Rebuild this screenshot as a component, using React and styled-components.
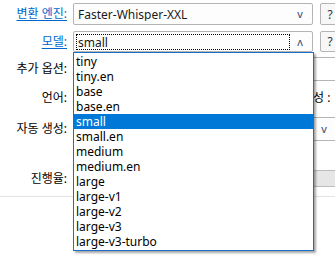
import React from "react";
import styled, { createGlobalStyle } from "styled-components";

const GlobalStyle = createGlobalStyle`
  html, body {
    margin: 0;
    padding: 0;
    background: #ffffff;
    overflow: hidden;
  }
  body {
    font-family: "Noto Sans", "Noto Sans CJK KR", sans-serif;
    font-size: 12px;
    color: #000;
  }
`;

const Page = styled.div`
  position: relative;
  width: 335px;
  height: 261px;
  overflow: hidden;
`;

const Form = styled.div`
  display: flex;
  flex-direction: column;
  padding-top: 3px;
`;

const Row = styled.div`
  display: flex;
  align-items: center;
  margin-top: ${(p) => p.$top || 0}px;
  height: ${(p) => p.$h || 22}px;
`;

const Label = styled.div`
  width: 67px;
  flex: none;
  margin-right: 6px;
  text-align: right;
  white-space: nowrap;
  line-height: 16px;
  color: ${(p) => (p.$link ? "#0066cc" : "#000")};
  text-decoration: ${(p) => (p.$link ? "underline" : "none")};
  text-underline-offset: 2px;
`;

const Combo = styled.div`
  box-sizing: border-box;
  flex: none;
  width: ${(p) => p.$w}px;
  height: 100%;
  border: 1px solid #b4b4b4;
  border-radius: 2px;
  background: #fdfdfd;
  display: flex;
  align-items: center;
  padding: 0 2px 0 2px;
`;

const ComboText = styled.div`
  flex: 1;
  height: 16px;
  line-height: 15px;
  padding-left: 1px;
  color: #1a1a1a;
  box-sizing: border-box;
  border: 1px dotted ${(p) => (p.$focus ? "#000" : "transparent")};
  white-space: nowrap;
  overflow: hidden;
`;

const Arrow = styled.div`
  width: 20px;
  text-align: center;
  color: #3c4a6a;
  font-size: 11px;
  line-height: 14px;
`;

const Help = styled.div`
  box-sizing: border-box;
  flex: none;
  margin-left: 7px;
  width: 20px;
  height: 100%;
  border: 1px solid #b4b4b4;
  border-radius: 2px;
  background: #f7f7f7;
  display: flex;
  align-items: center;
  justify-content: center;
  color: #333;
  font-size: 12px;
`;

const Input = styled.div`
  box-sizing: border-box;
  flex: none;
  width: 270px;
  height: 100%;
  border: 1px solid #b4b4b4;
  background: #fff;
`;

const SideText = styled.div`
  margin-left: 6px;
  white-space: nowrap;
  line-height: 16px;
`;

const Progress = styled.div`
  box-sizing: border-box;
  flex: none;
  width: 270px;
  height: 100%;
  border: 1px solid #bcbcbc;
  background: #e6e6e6;
`;

const Separator = styled.div`
  margin-top: 9px;
  height: 1px;
  background: #e3e3e3;
`;

const List = styled.div`
  position: absolute;
  left: 73px;
  top: 52px;
  width: 241px;
  box-sizing: border-box;
  border: 1px solid #1c6fc4;
  background: #fff;
  box-shadow: 2px 2px 2px rgba(0, 0, 0, 0.35);
  padding: 1px 0;
`;

const Item = styled.div`
  height: 15px;
  line-height: 15px;
  padding-left: 2px;
  white-space: nowrap;
  background: ${(p) => (p.$active ? "#0078d7" : "transparent")};
  color: ${(p) => (p.$active ? "#fff" : "#000")};
`;

const models = [
  "tiny",
  "tiny.en",
  "base",
  "base.en",
  "small",
  "small.en",
  "medium",
  "medium.en",
  "large",
  "large-v1",
  "large-v2",
  "large-v3",
  "large-v3-turbo",
];

export default function App() {
  return (
    <>
      <GlobalStyle />
      <Page>
        <Form>
          <Row $h={22}>
            <Label $link>변환 엔진:</Label>
            <Combo $w={240}>
              <ComboText>Faster-Whisper-XXL</ComboText>
              <Arrow>v</Arrow>
            </Combo>
            <Help>?</Help>
          </Row>
          <Row $top={6} $h={21}>
            <Label $link>모델:</Label>
            <Combo $w={240}>
              <ComboText $focus>small</ComboText>
              <Arrow>ʌ</Arrow>
            </Combo>
            <Help>?</Help>
          </Row>
          <Row $top={5} $h={24}>
            <Label>추가 옵션:</Label>
            <Input />
          </Row>
          <Row $top={6} $h={21}>
            <Label>언어:</Label>
            <Combo $w={223}>
              <ComboText />
              <Arrow>v</Arrow>
            </Combo>
            <SideText>구성 :</SideText>
          </Row>
          <Row $top={9} $h={24}>
            <Label>자동 생성:</Label>
            <Combo $w={264}>
              <ComboText />
              <Arrow>v</Arrow>
            </Combo>
          </Row>
          <Row $top={29} $h={17}>
            <Label>진행율:</Label>
            <Progress />
          </Row>
          <Separator />
        </Form>
        <List>
          {models.map((m) => (
            <Item key={m} $active={m === "small"}>
              {m}
            </Item>
          ))}
        </List>
      </Page>
    </>
  );
}
